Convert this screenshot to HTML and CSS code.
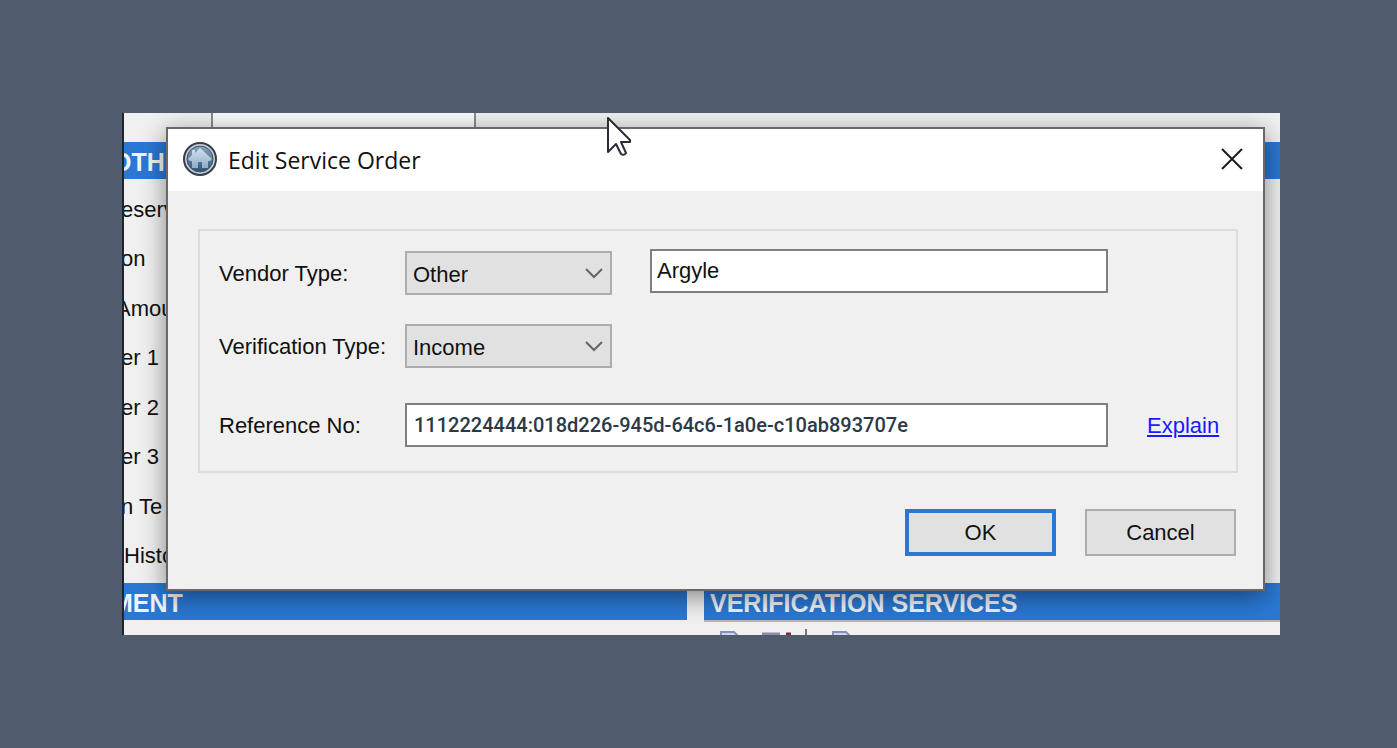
FILE: index.html
```html
<!DOCTYPE html>
<html lang="en">
<head>
    <meta charset="UTF-8">
    <meta name="viewport" content="width=device-width, initial-scale=1.0">
    <title>Edit Service Order</title>
    <link rel="stylesheet" href="styles.css">
</head>
<body>
    <main class="screen">
        <!-- form behind the dialog -->
        <div class="top-strip"><div class="top-field"></div></div>
        <h2 class="band band-other">OTHE</h2>
        <ul class="side-labels">
            <li>eserv</li>
            <li>on</li>
            <li class="cut">Amou</li>
            <li>er 1</li>
            <li>er 2</li>
            <li>er 3</li>
            <li>n Te</li>
            <li class="whole">Histo</li>
        </ul>
        <div class="sections">
            <section>
                <h2 class="band band-ment">MENT</h2>
            </section>
            <section>
                <h2 class="band band-services">VERIFICATION SERVICES</h2>
                <div class="toolbar">
                    <svg width="140" height="14" viewBox="0 0 140 14" aria-hidden="true">
                        <path d="M2 14V10h13l4 4" fill="#c9d8f4" stroke="#8990b4" stroke-width="2"/>
                        <path d="M43 12h18" stroke="#8c8bac" stroke-width="3"/>
                        <path d="M67 12h5" stroke="#8e2424" stroke-width="3"/>
                        <path d="M87 7v7" stroke="#777" stroke-width="2"/>
                        <path d="M114 14V10h13l4 4" fill="#c9d8f4" stroke="#8990b4" stroke-width="2"/>
                    </svg>
                </div>
            </section>
        </div>

        <div class="dialog" role="dialog" aria-labelledby="dialog-title">
            <header class="title-bar">
                <svg class="app-icon" width="36" height="36" viewBox="0 0 36 36" aria-hidden="true">
                    <defs>
                        <linearGradient id="disc" x1="0" y1="0" x2="0" y2="1">
                            <stop offset="0" stop-color="#8aa4bc"/>
                            <stop offset="1" stop-color="#2d5374"/>
                        </linearGradient>
                        <linearGradient id="house" x1="0" y1="0" x2="0" y2="1">
                            <stop offset="0" stop-color="#d3e2ef"/>
                            <stop offset="1" stop-color="#8eacc8"/>
                        </linearGradient>
                    </defs>
                    <circle cx="18" cy="18" r="16" fill="#c4ced8" stroke="#373d4a" stroke-width="2"/>
                    <circle cx="18" cy="18" r="13" fill="url(#disc)" stroke="#41566b" stroke-width="1"/>
                    <path d="M18 7l12 11-2 2h-2v7h-6v-6h-4v6h-6v-7H8l-2-2 4-4V9h3v3z" fill="url(#house)"/>
                </svg>
                <h1 id="dialog-title">Edit Service Order</h1>
                <button class="close-btn" type="button" aria-label="Close">
                    <svg width="22" height="22" viewBox="0 0 22 22" aria-hidden="true">
                        <path d="M1 1l20 20M21 1L1 21" stroke="#1c1c1c" stroke-width="2"/>
                    </svg>
                </button>
            </header>
            <form class="dialog-body">
                <div class="group">
                    <label for="vendor">Vendor Type:</label>
                    <div class="select-box">
                        <select id="vendor"><option>Other</option></select>
                        <svg width="20" height="12" viewBox="0 0 20 12" aria-hidden="true"><path d="M2 2l8 8 8-8" fill="none" stroke="#666" stroke-width="2"/></svg>
                    </div>
                    <input class="vendor-name" type="text" value="Argyle" aria-label="Vendor name">

                    <label for="verification">Verification Type:</label>
                    <div class="select-box">
                        <select id="verification"><option>Income</option></select>
                        <svg width="20" height="12" viewBox="0 0 20 12" aria-hidden="true"><path d="M2 2l8 8 8-8" fill="none" stroke="#666" stroke-width="2"/></svg>
                    </div>

                    <label for="reference">Reference No:</label>
                    <input class="reference" id="reference" type="text" value="1112224444:018d226-945d-64c6-1a0e-c10ab893707e">
                    <a href="#">Explain</a>
                </div>
                <div class="actions">
                    <button class="btn btn-ok" type="button">OK</button>
                    <button class="btn" type="button">Cancel</button>
                </div>
            </form>
        </div>

        <svg class="pointer" width="28" height="42" viewBox="0 0 28 42" aria-hidden="true">
            <path d="M2 2v34l8-8 5 10q3 2 5-1l-5-11h9v-2z" fill="#fff" stroke="#2b2b35" stroke-width="2" stroke-linejoin="round"/>
        </svg>
    </main>
</body>
</html>
```
FILE: styles.css
```css
* {
    box-sizing: border-box;
}

body {
    margin: 0;
    padding: 113px 117px 113px 122px;
    background-color: #505b6d;
    font-family: "Liberation Sans", Arial, sans-serif;
    font-size: 22px;
    color: #111;
}

.screen {
    position: relative;
    overflow: hidden;
    background-color: #f0f0f0;
    border-left: 2px solid #20242b;
}

.top-strip {
    height: 29px;
    padding-left: 87px;
}

.top-field {
    width: 265px;
    height: 100%;
    background-color: #fafafa;
    border: 2px solid #8a8a8a;
    border-width: 0 2px;
}

.band {
    margin: 0;
    height: 37px;
    line-height: 40px;
    background-color: #2a78d4;
    color: #f2f4f7;
    font-size: 25px;
    font-weight: bold;
    white-space: nowrap;
    overflow: hidden;
}

.band-other,
.band-ment {
    text-indent: -12px;
}

.band-services {
    padding-left: 6px;
}

.side-labels {
    display: grid;
    grid-auto-rows: 1fr;
    align-items: center;
    height: 404px;
    list-style: none;
    margin: 0;
    padding: 6px 0 2px;
}

.side-labels li {
    margin-left: -3px;
    white-space: nowrap;
}

.side-labels .cut {
    margin-left: -8px;
}

.side-labels .whole {
    margin-left: 0;
}

.sections {
    display: grid;
    grid-template-columns: 563px 1fr;
    gap: 17px;
}

.toolbar {
    height: 15px;
    padding-left: 15px;
    border-top: 2px solid #b5b5b5;
}

.toolbar svg {
    display: block;
}

/* dialog */
.dialog {
    position: absolute;
    top: 14px;
    right: 15px;
    bottom: 44px;
    left: 42px;
    background-color: #f0f0f0;
    border: 2px solid #686868;
    box-shadow: 0 6px 24px rgba(0, 0, 0, 0.45);
}

.title-bar {
    display: flex;
    align-items: center;
    gap: 10px;
    height: 62px;
    padding: 0 20px 3px 14px;
    background-color: #fff;
}

.title-bar h1 {
    margin: 0;
    padding-top: 3px;
    font-family: "Open Sans", "Noto Sans", sans-serif;
    font-size: 23px;
    font-weight: normal;
}

.close-btn {
    display: flex;
    margin-left: auto;
    padding: 0;
    background: none;
    border: none;
}

.dialog-body {
    padding: 38px 25px 0 30px;
}

.group {
    display: grid;
    grid-template-columns: 186px 207px 38px 1fr 128px;
    grid-template-rows: 46px 44px 50px;
    row-gap: 29px;
    align-items: end;
    height: 244px;
    padding: 18px 0 0 19px;
    border: 2px solid #dcdcdc;
}

.group label,
.group a {
    height: 44px;
    line-height: 46px;
    white-space: nowrap;
}

.group label {
    grid-column: 1;
}

.select-box {
    display: flex;
    align-items: center;
    position: relative;
}

.select-box select {
    appearance: none;
    width: 100%;
    height: 44px;
    padding: 2px 6px 0;
    background-color: #e1e1e1;
    border: 2px solid #adadad;
    border-radius: 0;
    font: inherit;
    color: inherit;
}

.select-box svg {
    position: absolute;
    right: 8px;
}

.group input {
    width: 100%;
    height: 44px;
    background-color: #fff;
    border: 2px solid #7f7f7f;
    padding: 0 5px;
    font: inherit;
    color: inherit;
}

.group .vendor-name {
    grid-column: 4;
    align-self: start;
}

.group .reference {
    grid-column: 2 / 5;
    padding: 0 7px;
    font-family: Roboto, sans-serif;
    font-size: 20px;
    font-weight: 500;
    color: #2b3948;
}

.group a {
    padding-left: 39px;
    color: #1a1aff;
}

.actions {
    display: flex;
    justify-content: flex-end;
    gap: 29px;
    padding: 36px 2px 0 0;
}

.btn {
    width: 151px;
    height: 47px;
    padding: 0;
    background-color: #e1e1e1;
    border: 2px solid #adadad;
    font: inherit;
    color: inherit;
}

.btn-ok {
    border: 4px solid #2a78d4;
}

.pointer {
    position: absolute;
    top: 3px;
    left: 482px;
}
```
